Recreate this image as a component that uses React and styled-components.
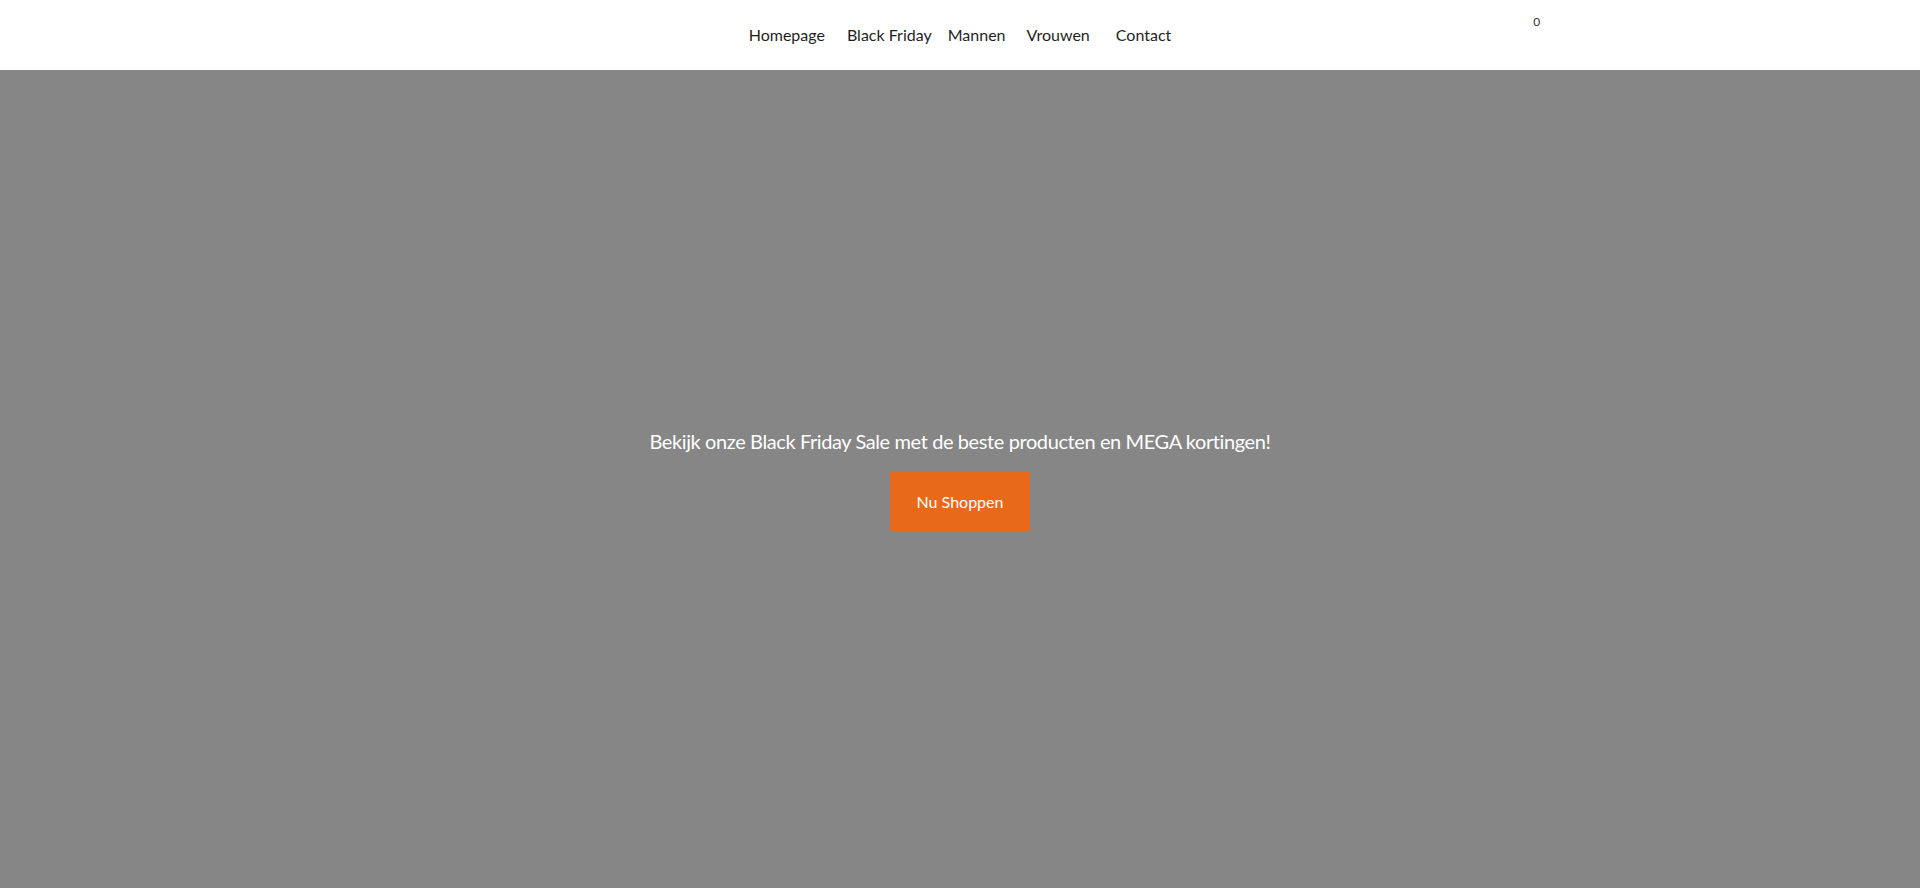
import React from 'react';
import styled, { createGlobalStyle } from 'styled-components';

const GlobalStyle = createGlobalStyle`
	html, body {
		margin: 0;
		padding: 0;
		height: 100%;
	}
	body {
		font-family: 'Lato', 'Liberation Sans', sans-serif;
		background: #868686;
	}
	#root {
		height: 100%;
	}
`;

const navItems = [
	{ label: 'Homepage', pad: '0 11px 0 0' },
	{ label: 'Black Friday', pad: '0 8px 0 11px' },
	{ label: 'Mannen', pad: '0 10px 0 8px' },
	{ label: 'Vrouwen', pad: '0 13px 0 11px' },
	{ label: 'Contact', pad: '0 0 0 13px' },
];

const App = () => {
	return (
		<Page>
			<GlobalStyle />
			<Header>
				<Spacer />
				<Nav>
					{navItems.map((item) => (
						<NavLink key={item.label} $pad={item.pad} href="#">
							{item.label}
						</NavLink>
					))}
				</Nav>
				<CartArea>
					<CartCount>0</CartCount>
				</CartArea>
			</Header>
			<Hero>
				<HeroTitle>
					Bekijk onze Black Friday Sale met de beste producten en MEGA kortingen!
				</HeroTitle>
				<ShopButton href="#">Nu Shoppen</ShopButton>
			</Hero>
		</Page>
	);
};

export default App;

const Page = styled.div`
	display: flex;
	flex-direction: column;
	height: 888px;
`;

const Header = styled.header`
	box-sizing: border-box;
	height: 70px;
	flex-shrink: 0;
	background-color: #ffffff;
	display: grid;
	grid-template-columns: 1fr auto 1fr;
	align-items: center;
`;

const Spacer = styled.div``;

const Nav = styled.nav`
	display: flex;
	align-items: center;
`;

const NavLink = styled.a`
	font-family: 'Lato', 'Liberation Sans', sans-serif;
	font-size: 16px;
	color: #1f1f1f;
	text-decoration: none;
	white-space: nowrap;
	padding: ${(p) => p.$pad};
	line-height: 1;
`;

const CartArea = styled.div`
	align-self: start;
	padding: 10px 0 0 362px;
`;

const CartCount = styled.span`
	font-family: 'Lato', 'Liberation Sans', sans-serif;
	font-size: 12px;
	color: #333333;
`;

const Hero = styled.section`
	flex: 1;
	background-color: #868686;
	display: flex;
	flex-direction: column;
	align-items: center;
	justify-content: center;
	gap: 17px;
`;

const HeroTitle = styled.h1`
	font-family: 'Lato', 'Liberation Sans', sans-serif;
	font-weight: 400;
	font-size: 20px;
	letter-spacing: -0.4px;
	color: #ffffff;
	margin: 0;
	line-height: 1.4;
	text-align: center;
`;

const ShopButton = styled.a`
	box-sizing: border-box;
	display: flex;
	align-items: center;
	justify-content: center;
	width: 140px;
	height: 59px;
	background-color: #e8691a;
	color: #ffffff;
	font-family: 'Lato', 'Liberation Sans', sans-serif;
	font-size: 16px;
	text-decoration: none;
`;
